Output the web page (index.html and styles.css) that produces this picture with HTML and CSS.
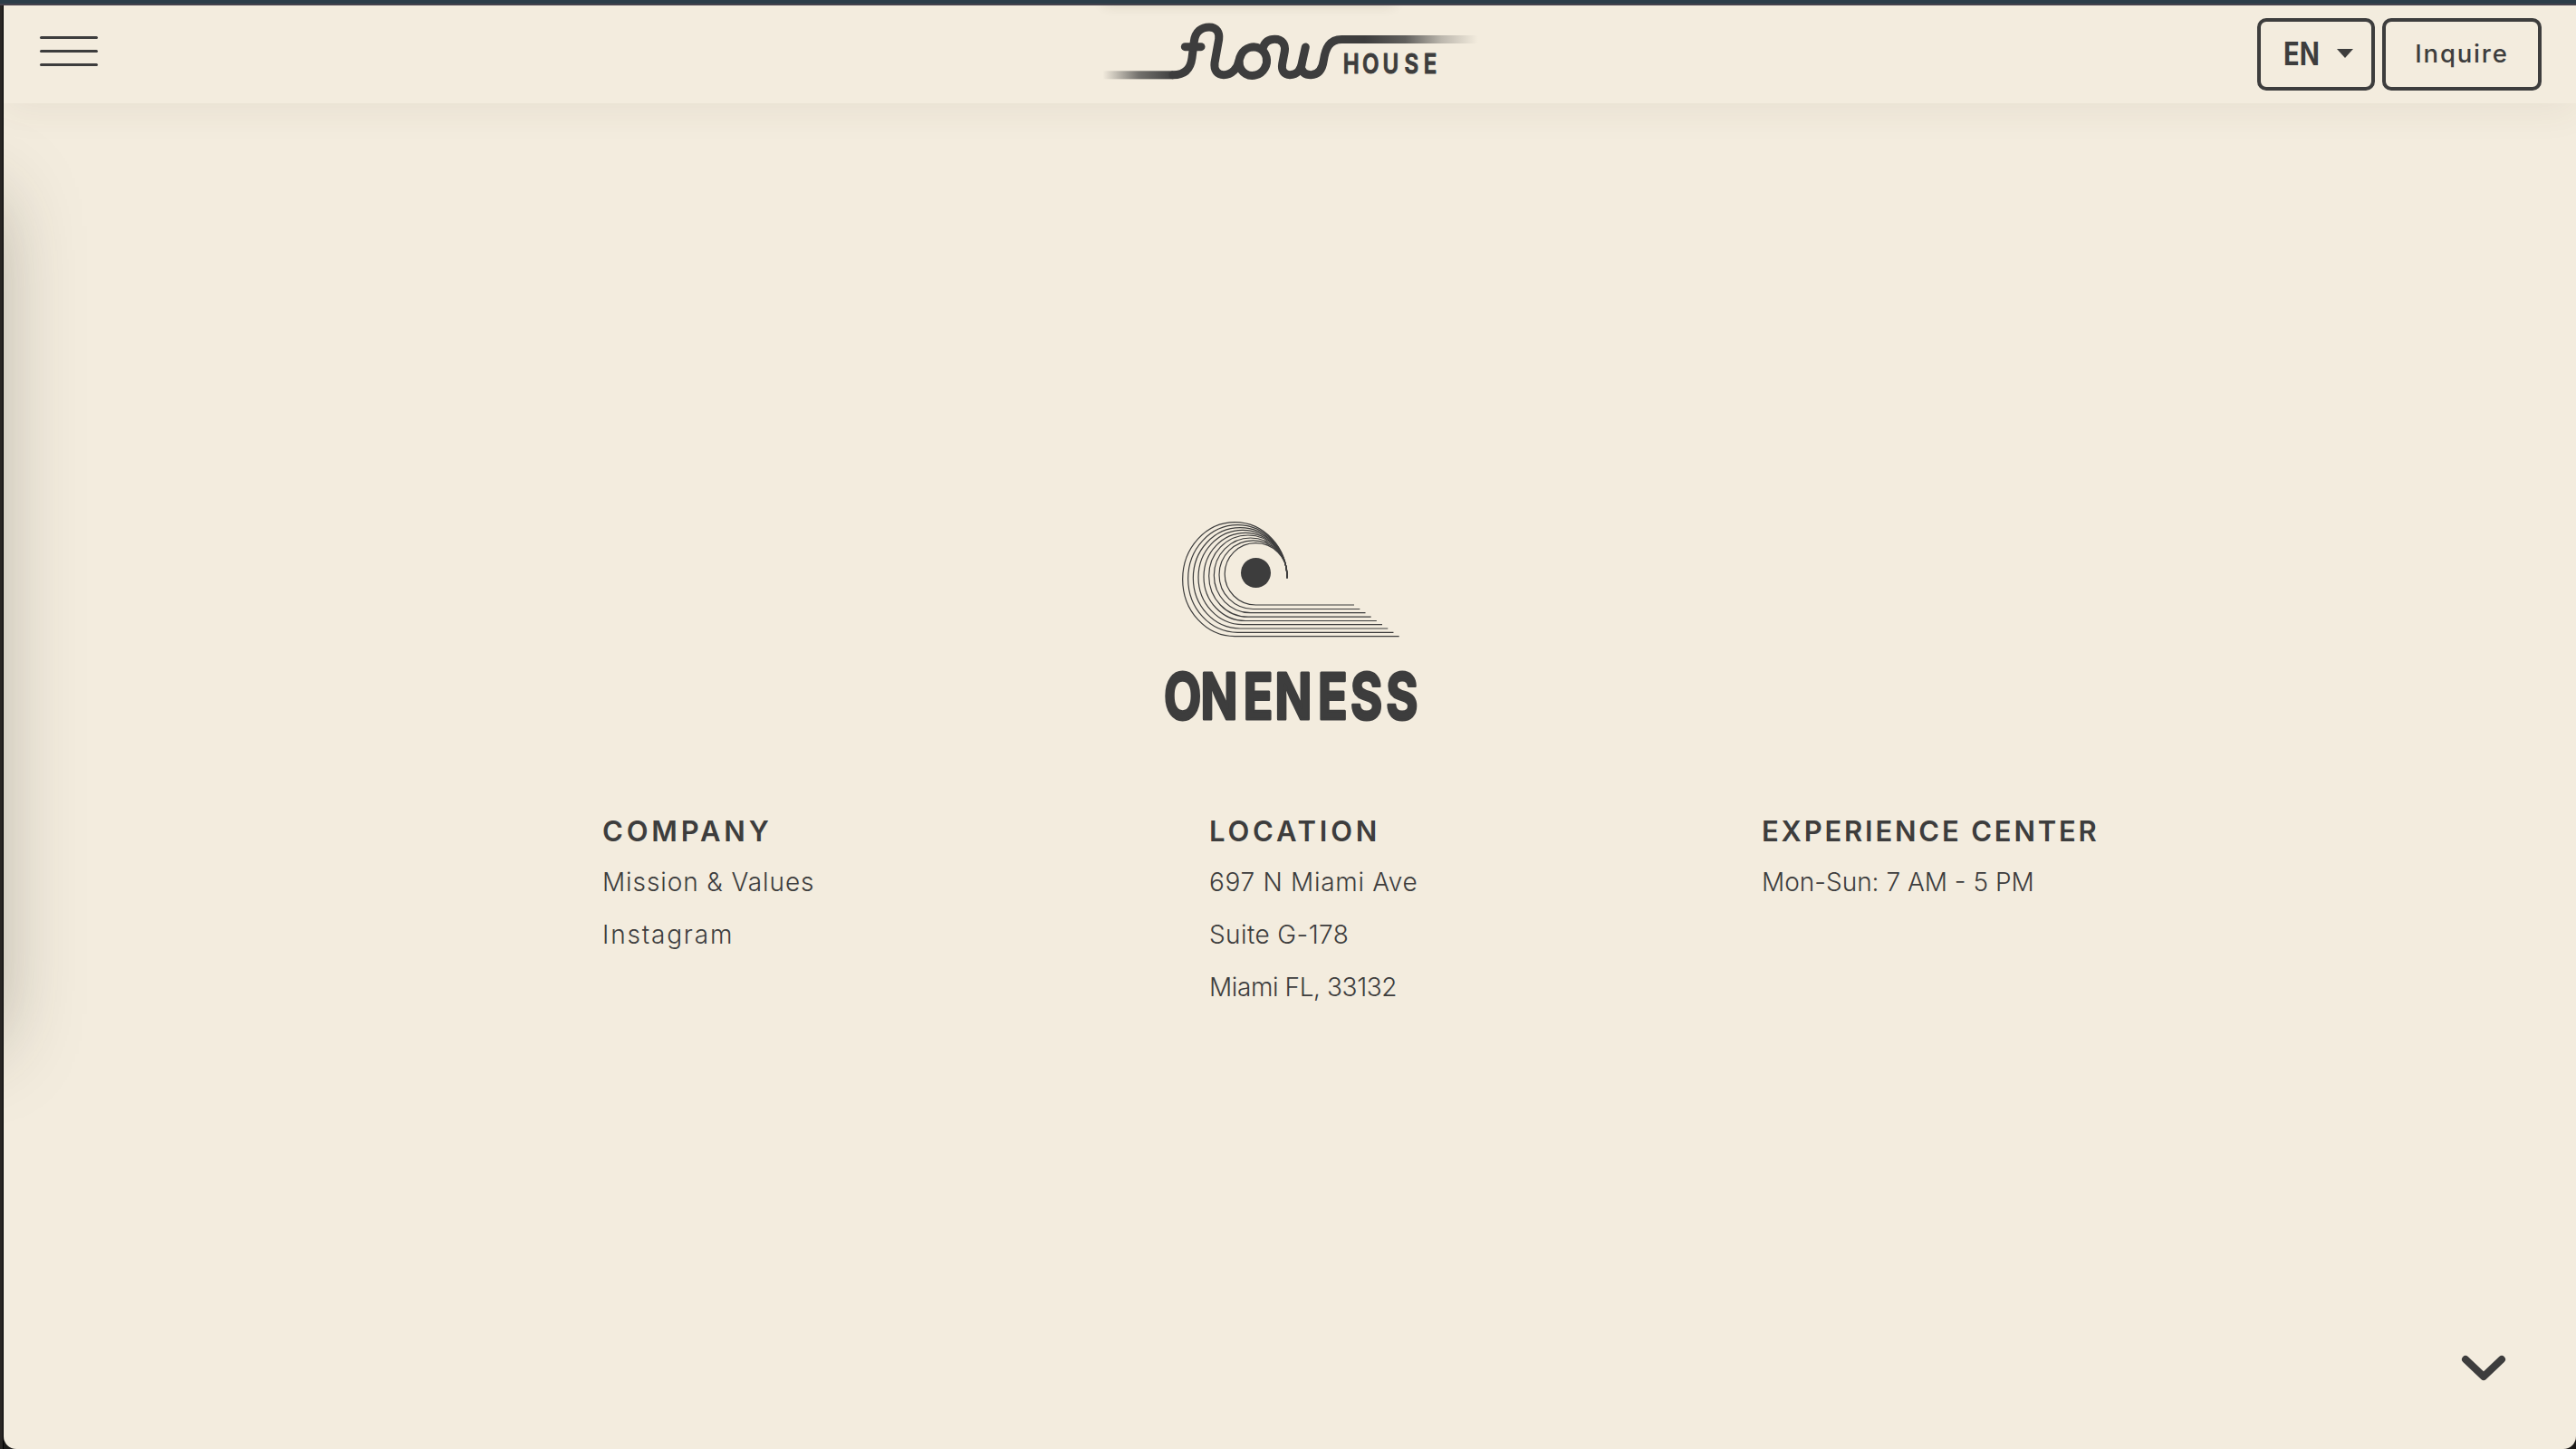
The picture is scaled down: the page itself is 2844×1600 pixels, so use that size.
FILE: index.html
```html
<!DOCTYPE html>
<html lang="en">
<head>
<meta charset="utf-8">
<title>Flow House</title>
<link rel="stylesheet" href="styles.css">
</head>
<body>
<div class="window">
  <header class="bar">
    <button class="menu" aria-label="Menu"><span></span><span></span><span></span></button>
    <svg class="brand" viewBox="0 18 1350 324" role="img">
      <defs>
        <linearGradient id="fadeLeft" gradientUnits="userSpaceOnUse" x1="52" y1="0" x2="290" y2="0">
          <stop offset="0" stop-color="#3d3d3d" stop-opacity="0"/>
          <stop offset=".5" stop-color="#3d3d3d" stop-opacity=".7"/>
          <stop offset="1" stop-color="#3d3d3d"/>
        </linearGradient>
        <linearGradient id="fadeRight" gradientUnits="userSpaceOnUse" x1="920" y1="0" x2="1295" y2="0">
          <stop offset="0" stop-color="#3d3d3d"/>
          <stop offset=".36" stop-color="#3d3d3d" stop-opacity=".8"/>
          <stop offset=".68" stop-color="#3d3d3d" stop-opacity=".3"/>
          <stop offset="1" stop-color="#3d3d3d" stop-opacity="0"/>
        </linearGradient>
      </defs>
      <rect x="52" y="235" width="234" height="27" fill="url(#fadeLeft)"/>
      <rect x="844" y="117" width="451" height="27" fill="url(#fadeRight)"/>
      <g class="script">
        <path d="M285 248.500C330 248.500 344 222 348 192L355 137C359 104 380 90 405 90C430 90 440 108 437 130L423 208C420 232 432 248 453 248C480 248 499 226 503 203"/>
        <ellipse cx="550" cy="203" rx="45" ry="48" transform="rotate(30 550 203)"/>
        <path d="M583 158C590 138 605 130 622 130C648 130 658 148 655 170L647 212C643 234 654 248 672 248C697 248 710 230 713 205L724 156"/>
        <path d="M709 222C712 240 724 248 742 248C768 248 780 228 784 200C790 160 803 130 845 130.500"/>
        <path d="M325 155H378"/>
      </g>
      <text class="house" transform="translate(2 242) scale(.82 1)" x="1032 1110 1192 1280 1358">HOUSE</text>
    </svg>
    <div class="actions">
      <button class="btn lang"><span>EN</span><svg viewBox="0 0 18 10"><path d="M0 0H18L9 10Z"/></svg></button>
      <button class="btn inquire">Inquire</button>
    </div>
  </header>
  <main class="page">
    <svg class="oneness" viewBox="0 0 930 750" role="img">
      <g class="lines">
        <path d="M824 428H280A173 189 0 0 1 280 50A173 185 0 0 1 453 235"/>
        <path d="M805.400 415H289A164 178 0 0 1 289 59A164 176 0 0 1 453 235"/>
        <path d="M786.800 402H297.500A155.500 167 0 0 1 297.500 68A155.500 167 0 0 1 453 235"/>
        <path d="M768 389H306A147 156.500 0 0 1 306 76A147 157 0 0 1 453 233V235"/>
        <path d="M749.500 376.500H315A138 145.750 0 0 1 315 85A138 146 0 0 1 453 231V235"/>
        <path d="M731 363.500H323.500A129.500 135.250 0 0 1 323.500 93A129.500 135 0 0 1 453 228V235"/>
        <path d="M712.500 350H332A121 124 0 0 1 332 102A121 124 0 0 1 453 226V235"/>
        <path d="M694 337.500H340.500A112.500 113.500 0 0 1 340.500 110.500A112.500 113.500 0 0 1 453 224V235"/>
        <path d="M675 324H349A102.500 102.500 0 0 1 349 119A104 103 0 0 1 453 222V235"/>
      </g>
      <circle cx="349.500" cy="217.500" r="49.500"/>
      <text class="word" transform="translate(0 701) scale(.76 1)" x="59 219 406 543 730 872 1027">ONENESS</text>
    </svg>
    <footer class="columns">
      <section class="company">
        <h2>COMPANY</h2>
        <p class="mission">Mission &amp; Values</p>
        <p class="instagram">Instagram</p>
      </section>
      <section class="location">
        <h2>LOCATION</h2>
        <p class="street">697 N Miami Ave</p>
        <p class="suite">Suite G-178</p>
        <p class="city">Miami FL, 33132</p>
      </section>
      <section class="experience">
        <h2>EXPERIENCE CENTER</h2>
        <p>Mon-Sun: 7 AM - 5 PM</p>
      </section>
    </footer>
  </main>
  <svg class="scroll" viewBox="0 0 50 30"><path d="M5 5L25 24L45 5"/></svg>
</div>
</body>
</html>
```
FILE: styles.css
```css
* { box-sizing: border-box; margin: 0; }
body {
  height: 1600px;
  padding: 6px 0 0 4px;
  overflow: hidden;
  background: linear-gradient(#2c3d49 0 4px, #45424d 4px 6px, transparent 6px), linear-gradient(90deg, #292624 0 3px, #000 3px 4px, #1c1a18 4px);
  color: #3d3d3d;
  font-family: Inter, sans-serif;
}
.window {
  position: relative;
  height: 1594px;
  display: flex;
  flex-direction: column;
  overflow: hidden;
  border-radius: 0 0 14px 14px;
  background: #f3ecde;
}
/* soft shade cast in from the left edge */
.window::before {
  content: "";
  position: absolute;
  left: -108px;
  top: 214px;
  width: 100px;
  height: 930px;
  box-shadow: 0 0 90px rgba(50, 50, 40, .34);
}
.bar {
  position: relative;
  height: 108px;
  flex: none;
  display: grid;
  grid-template-columns: 1196px 450px 1fr;
  background: #f3ecde;
  box-shadow: 0 8px 40px rgba(90, 70, 40, .07);
}
.bar::after {
  content: "";
  position: absolute;
  left: 1215px;
  top: -20px;
  width: 320px;
  height: 20px;
  box-shadow: 0 0 14px rgba(60, 50, 30, .12);
}
button { background: none; border: 0; padding: 0; color: inherit; font: inherit; }
.menu {
  width: 64px;
  height: 33px;
  margin: 34px 0 0 40px;
  display: flex;
  flex-direction: column;
  justify-content: space-between;
}
.menu span { width: 64px; height: 2.6px; border-radius: 2px; background: #3d3d3d; }
.brand { width: 450px; height: 108px; }
.script { fill: none; stroke: #3d3d3d; stroke-width: 27; stroke-linecap: round; stroke-linejoin: round; }
.house { font-size: 88px; font-weight: 600; fill: #3d3d3d; stroke: #3d3d3d; stroke-width: 3; stroke-linejoin: round; }
.actions { display: flex; gap: 8px; justify-content: flex-end; padding: 14px 38px 0 0; }
.btn {
  height: 80px;
  display: flex;
  align-items: center;
  justify-content: center;
  border: 4px solid #3d3d3d;
  border-radius: 10px;
}
.lang { width: 130px; gap: 20px; padding: 0 0 2px 5px; }
.lang span { font-size: 35px; font-weight: 700; transform: scaleX(.83); width: 38px; display: flex; justify-content: center; }
.lang svg { width: 18px; height: 10px; fill: #3d3d3d; }
.inquire { width: 176px; padding-bottom: 3px; font-size: 27.500px; font-weight: 500; letter-spacing: 1.8px; }
.page { flex: 1; display: flex; flex-direction: column; }
.oneness { width: 310px; height: 250px; margin: 446px 0 0 1266px; }
.oneness circle { fill: #3d3d3d; }
.lines { fill: none; stroke: #3d3d3d; stroke-width: 3.600; }
.word { font-size: 212px; font-weight: 700; fill: #3d3d3d; stroke: #3d3d3d; stroke-width: 9; stroke-linejoin: round; }
.columns { display: grid; grid-template-columns: 670px 610px 1fr; padding: 77px 0 0 661px; }
h2 { margin-bottom: -4px; font-size: 31px; line-height: 62px; font-weight: 600; letter-spacing: 3.8px; white-space: nowrap; }
.experience h2 { letter-spacing: 2.8px; }
p { font-size: 28px; line-height: 58px; font-weight: 350; white-space: nowrap; }
.mission { letter-spacing: .9px; }
.instagram { letter-spacing: 1.8px; }
.street { letter-spacing: .7px; }
.suite { letter-spacing: .4px; }
.city { letter-spacing: -.4px; }
.scroll { position: absolute; left: 2713px; top: 1490px; width: 50px; height: 30px; }
.scroll path { fill: none; stroke: #3d3d3d; stroke-width: 8; stroke-linecap: round; stroke-linejoin: round; }
```
